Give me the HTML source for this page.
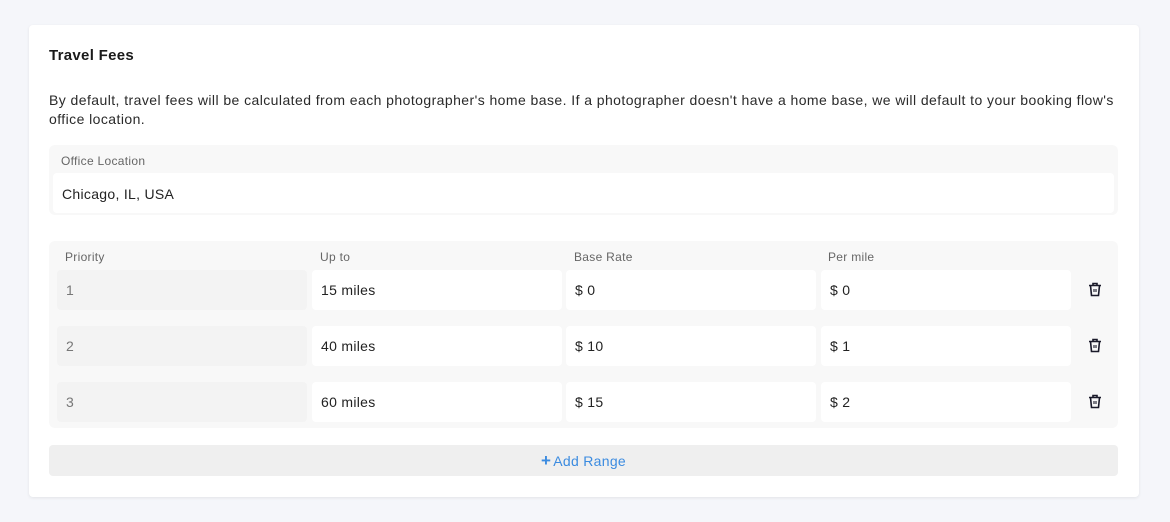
<!DOCTYPE html>
<html><head><style>
*{box-sizing:border-box;margin:0;padding:0}
body{width:1170px;height:522px;background:#f5f6fa;font-family:"Liberation Sans",sans-serif;color:#222;position:relative;overflow:hidden;letter-spacing:0.3px}
.card{position:absolute;left:29px;top:25px;width:1110px;height:472px;background:#fff;border-radius:4px;box-shadow:0 1px 3px rgba(0,0,0,.08)}
.abs{position:absolute}
h1{position:absolute;left:20px;top:22px;font-size:15px;font-weight:bold;color:#1a1a1a}
.desc{position:absolute;left:20px;top:66px;width:1080px;font-size:14px;line-height:19px;color:#2a2a2a;letter-spacing:0.43px}
.office{position:absolute;left:20px;top:120px;width:1069px;height:70px;background:#f8f8f8;border-radius:6px}
.lbl{font-size:12px;color:#666}
.inp{position:absolute;background:#fff;border-radius:4px;font-size:14px;color:#222;padding-left:9px;display:flex;align-items:center}
.table{position:absolute;left:20px;top:216px;width:1069px;height:187px;background:#f8f8f8;border-radius:6px}
.pri{background:#f3f3f3;color:#777}
.add{position:absolute;left:20px;top:420px;width:1069px;height:31px;background:#efefef;border-radius:4px;color:#3b8be0;font-size:14px;display:flex;align-items:center;justify-content:center}
</style></head><body>
<div class="card">
<h1>Travel Fees</h1>
<div class="desc">By default, travel fees will be calculated from each photographer's home base. If a photographer doesn't have a home base, we will default to your booking flow's office location.</div>
<div class="office">
<div class="abs lbl" style="left:12px;top:9px">Office Location</div>
<div class="inp" style="left:4px;top:28px;width:1061px;height:40px;padding-top:1px">Chicago, IL, USA</div>
</div>
<div class="table">
<div class="abs lbl" style="left:16px;top:9px">Priority</div>
<div class="abs lbl" style="left:271px;top:9px">Up to</div>
<div class="abs lbl" style="left:525px;top:9px">Base Rate</div>
<div class="abs lbl" style="left:779px;top:9px">Per mile</div>
</div>
<div class="add"><b style="font-size:17px;margin-right:2px">+</b>Add Range</div>
</div>
<div class="inp pri" style="left:57px;top:270px;width:250px;height:40px">1</div>
<div class="inp" style="left:312px;top:270px;width:250px;height:40px">15 miles</div>
<div class="inp" style="left:566px;top:270px;width:250px;height:40px">$ 0</div>
<div class="inp" style="left:821px;top:270px;width:250px;height:40px">$ 0</div>
<div class="inp pri" style="left:57px;top:326px;width:250px;height:40px">2</div>
<div class="inp" style="left:312px;top:326px;width:250px;height:40px">40 miles</div>
<div class="inp" style="left:566px;top:326px;width:250px;height:40px">$ 10</div>
<div class="inp" style="left:821px;top:326px;width:250px;height:40px">$ 1</div>
<div class="inp pri" style="left:57px;top:382px;width:250px;height:40px">3</div>
<div class="inp" style="left:312px;top:382px;width:250px;height:40px">60 miles</div>
<div class="inp" style="left:566px;top:382px;width:250px;height:40px">$ 15</div>
<div class="inp" style="left:821px;top:382px;width:250px;height:40px">$ 2</div>
<svg class="abs" style="left:1088px;top:282px" width="14" height="15" viewBox="0 0 14 15"><g fill="none" stroke="#1a1a2a" stroke-width="1.6"><path d="M1 3.5h12M5 3.5V1.5h4v2M2.5 3.5l1 10h7l1-10"/><path d="M6 7v3M8 7v3" stroke-width="1.1"/></g></svg>
<svg class="abs" style="left:1088px;top:338px" width="14" height="15" viewBox="0 0 14 15"><g fill="none" stroke="#1a1a2a" stroke-width="1.6"><path d="M1 3.5h12M5 3.5V1.5h4v2M2.5 3.5l1 10h7l1-10"/><path d="M6 7v3M8 7v3" stroke-width="1.1"/></g></svg>
<svg class="abs" style="left:1088px;top:394px" width="14" height="15" viewBox="0 0 14 15"><g fill="none" stroke="#1a1a2a" stroke-width="1.6"><path d="M1 3.5h12M5 3.5V1.5h4v2M2.5 3.5l1 10h7l1-10"/><path d="M6 7v3M8 7v3" stroke-width="1.1"/></g></svg>
</body></html>
